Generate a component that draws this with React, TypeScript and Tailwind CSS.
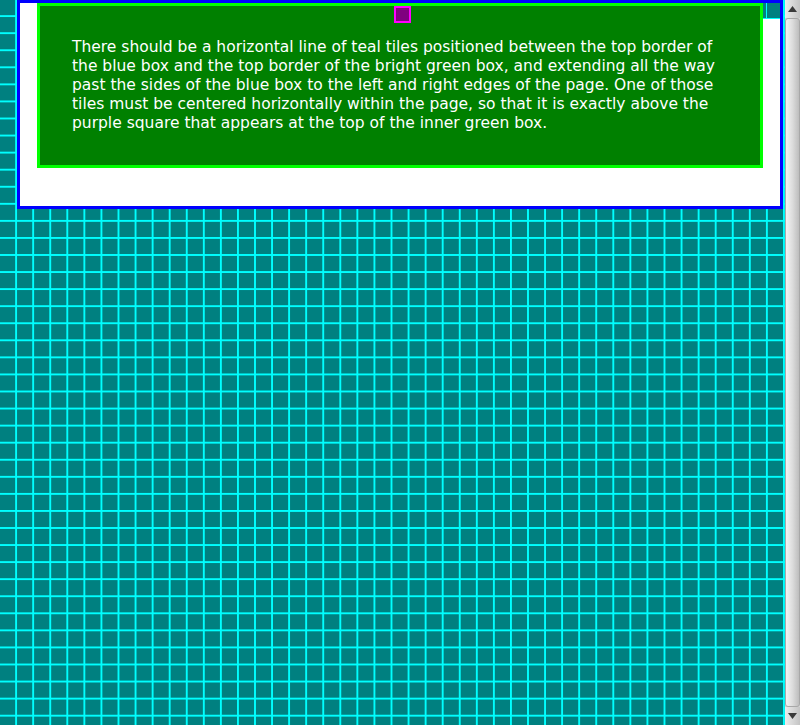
export default function App() {
  return (
    <div className="flex h-[725px] overflow-hidden font-['DejaVu_Sans',sans-serif]">
      <div className="h-full w-[785px] bg-[#008080] bg-[linear-gradient(to_right,transparent_15px,#00ffff_15px),linear-gradient(to_bottom,transparent_15px,#00ffff_15px)] bg-[length:17.07px_17.07px] pl-[17px] pr-[2px]">
        <div className="relative border-[3px] border-[#0000ff] bg-white px-[17px] pb-[38px]">
          {/* row of teal tiles peeking out past the green box */}
          <div className="absolute right-0 top-0 flex h-[16px] w-[17px] border-b border-[#00ffff] bg-[#008080]">
            <div className="ml-[3px] w-px bg-[#00ffff]" />
          </div>

          <div className="relative border-[3px] border-[#00ff00] bg-[#008000] p-8 text-[15.5px] leading-[19px] text-white">
            <div className="absolute left-[354px] top-0 size-[17px] border-2 border-[#ff00ff] bg-[#800080]" />
            <p>
              There should be a horizontal line of teal tiles positioned between the top border of
              the blue box and the top border of the bright green box, and extending all the way
              past the sides of the blue box to the left and right edges of the page. One of those
              tiles must be centered horizontally within the page, so that it is exactly above the
              purple square that appears at the top of the inner green box.
            </p>
          </div>
        </div>
      </div>

      {/* window scrollbar */}
      <div className="flex h-full w-[15px] flex-col bg-[#d4d4d4]">
        <div className="flex h-[18px] items-center justify-center bg-[linear-gradient(to_right,#ececec,#c4c4c4)]">
          <svg width="9" height="6" viewBox="0 0 9 6">
            <path d="M4.5 0 L9 6 L0 6 Z" fill="#3a3a3a" />
          </svg>
        </div>
        <div className="flex-1 rounded-[3px] border border-[#a8a8a8] bg-[linear-gradient(to_right,#f4f4f4,#dcdcdc_50%,#bdbdbd)]" />
        <div className="flex h-[18px] items-center justify-center bg-[linear-gradient(to_right,#ececec,#c4c4c4)]">
          <svg width="9" height="6" viewBox="0 0 9 6">
            <path d="M0 0 L9 0 L4.5 6 Z" fill="#3a3a3a" />
          </svg>
        </div>
      </div>
    </div>
  );
}
